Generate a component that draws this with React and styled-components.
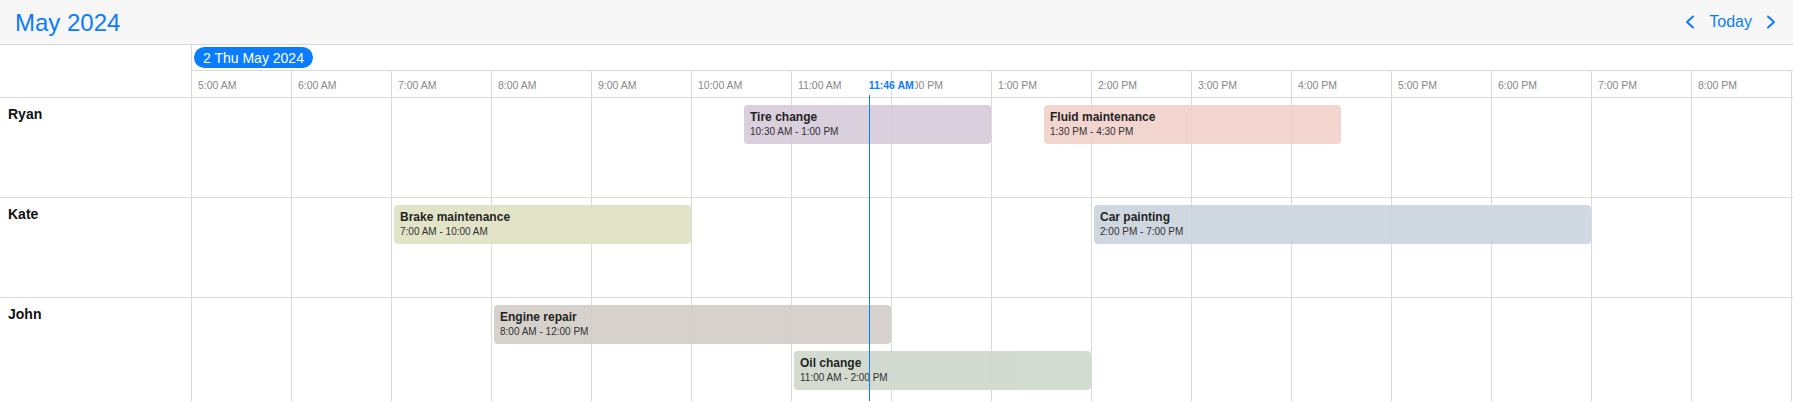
import React from "react";
import styled, { createGlobalStyle } from "styled-components";

const BLUE = "#0a7cff";
const LINE = "#dadada";
const RESOURCE_W = 192;
const HOUR_W = 100;
const START_HOUR = 5;
const NOW = 11 + 46 / 60;

const GlobalStyle = createGlobalStyle`
    body {
        margin: 0;
        background: #fff;
        font-family: "Liberation Sans", Arial, Helvetica, sans-serif;
        color: #111;
        overflow: hidden;
    }
`;

const Page = styled.div`
    width: 1793px;
`;

const Header = styled.div`
    height: 45px;
    box-sizing: border-box;
    display: flex;
    align-items: center;
    justify-content: space-between;
    padding: 0 17px 0 15px;
    background: #f7f7f7;
    border-bottom: 1px solid #d6d6d6;
`;

const Title = styled.div`
    font-size: 24px;
    color: ${BLUE};
    margin-top: 1px;
`;

const Nav = styled.div`
    display: flex;
    align-items: center;
    gap: 14px;
    color: ${BLUE};
`;

const Today = styled.span`
    font-size: 16px;
`;

const Row = styled.div`
    display: flex;
    height: ${(p) => p.height}px;
    box-sizing: border-box;
    border-bottom: 1px solid ${(p) => (p.noLine ? "transparent" : LINE)};
`;

const Corner = styled.div`
    width: ${RESOURCE_W}px;
    flex-shrink: 0;
    box-sizing: border-box;
    border-right: 1px solid ${LINE};
`;

const ResourceName = styled(Corner)`
    padding: 8px 8px;
    font-size: 14px;
    font-weight: bold;
    color: #111;
`;

const TimelineHead = styled.div`
    display: flex;
    flex-direction: column;
    flex: 1;
`;

const DateRow = styled.div`
    height: 26px;
    box-sizing: border-box;
    border-bottom: 1px solid ${LINE};
    padding: 2px 0 0 2px;
`;

const DateBadge = styled.span`
    display: inline-flex;
    align-items: center;
    height: 21px;
    padding: 0 9px;
    border-radius: 11px;
    background: ${BLUE};
    color: #fff;
    font-size: 14px;
`;

const TimeRow = styled.div`
    position: relative;
    display: flex;
    height: 26px;
`;

const HourCell = styled.div`
    width: ${HOUR_W}px;
    flex-shrink: 0;
    box-sizing: border-box;
    border-right: 1px solid ${LINE};
    padding: 8px 0 0 6px;
    font-size: 10.5px;
    color: #888;
`;

const NowLabel = styled.span`
    position: absolute;
    top: 8px;
    padding-right: 1px;
    background: rgba(255, 255, 255, 0.85);
    color: ${BLUE};
    font-size: 10.5px;
    font-weight: bold;
    z-index: 2;
`;

const Body = styled.div`
    position: relative;
`;

const Lane = styled.div`
    position: relative;
    display: flex;
    flex: 1;
`;

const Slot = styled.div`
    width: ${HOUR_W}px;
    flex-shrink: 0;
    box-sizing: border-box;
    border-right: 1px solid ${LINE};
`;

const Event = styled.div`
    position: absolute;
    height: 39px;
    box-sizing: border-box;
    padding: 5px 6px 0;
    border-radius: 4px;
    background: ${(p) => p.color};
    opacity: 0.93;
    overflow: hidden;
    white-space: nowrap;
`;

const EventTitle = styled.div`
    font-size: 12px;
    font-weight: bold;
    color: #111;
`;

const EventTime = styled.div`
    margin-top: 2px;
    font-size: 10px;
    color: #222;
`;

const NowLine = styled.div`
    position: absolute;
    top: -3px;
    bottom: 0;
    width: 1px;
    background: ${BLUE};
    z-index: 3;
`;

const hours = [
    "5:00 AM", "6:00 AM", "7:00 AM", "8:00 AM", "9:00 AM", "10:00 AM",
    "11:00 AM", "12:00 PM", "1:00 PM", "2:00 PM", "3:00 PM", "4:00 PM",
    "5:00 PM", "6:00 PM", "7:00 PM", "8:00 PM",
];

const resources = [
    {
        name: "Ryan",
        events: [
            { title: "Tire change", time: "10:30 AM - 1:00 PM", start: 10.5, end: 13, color: "#d8ccda", level: 0 },
            { title: "Fluid maintenance", time: "1:30 PM - 4:30 PM", start: 13.5, end: 16.5, color: "#f2d2cc", level: 0 },
        ],
    },
    {
        name: "Kate",
        events: [
            { title: "Brake maintenance", time: "7:00 AM - 10:00 AM", start: 7, end: 10, color: "#e0e3c4", level: 0 },
            { title: "Car painting", time: "2:00 PM - 7:00 PM", start: 14, end: 19, color: "#ccd5df", level: 0 },
        ],
    },
    {
        name: "John",
        events: [
            { title: "Engine repair", time: "8:00 AM - 12:00 PM", start: 8, end: 12, color: "#d3cec8", level: 0 },
            { title: "Oil change", time: "11:00 AM - 2:00 PM", start: 11, end: 14, color: "#d0d9cd", level: 1 },
        ],
    },
];

function Chevron({ dir }) {
    const points = dir === "left" ? "8,1.5 2,7 8,12.5" : "2,1.5 8,7 2,12.5";
    return (
        <svg width="10" height="14" viewBox="0 0 10 14">
            <polyline points={points} fill="none" stroke={BLUE} strokeWidth="2" strokeLinecap="round" strokeLinejoin="round" />
        </svg>
    );
}

function App() {
    const nowOffset = (NOW - START_HOUR) * HOUR_W;

    return (
        <Page>
            <GlobalStyle />
            <Header>
                <Title>May 2024</Title>
                <Nav>
                    <Chevron dir="left" />
                    <Today>Today</Today>
                    <Chevron dir="right" />
                </Nav>
            </Header>

            <Row height={53}>
                <Corner />
                <TimelineHead>
                    <DateRow>
                        <DateBadge>2 Thu May 2024</DateBadge>
                    </DateRow>
                    <TimeRow>
                        {hours.map((h) => (
                            <HourCell key={h}>{h}</HourCell>
                        ))}
                        <NowLabel style={{ left: nowOffset }}>11:46 AM</NowLabel>
                    </TimeRow>
                </TimelineHead>
            </Row>

            <Body>
                {resources.map((r, i) => {
                    const levels = Math.max(...r.events.map((e) => e.level)) + 1;
                    return (
                        <Row key={r.name} height={100 + (levels - 1) * 46} noLine={i === resources.length - 1}>
                            <ResourceName>{r.name}</ResourceName>
                            <Lane>
                                {hours.map((h) => (
                                    <Slot key={h} />
                                ))}
                                {r.events.map((e) => (
                                    <Event
                                        key={e.title}
                                        color={e.color}
                                        style={{
                                            left: (e.start - START_HOUR) * HOUR_W + 2,
                                            width: (e.end - e.start) * HOUR_W - 3,
                                            top: 7 + e.level * 46,
                                        }}
                                    >
                                        <EventTitle>{e.title}</EventTitle>
                                        <EventTime>{e.time}</EventTime>
                                    </Event>
                                ))}
                            </Lane>
                        </Row>
                    );
                })}
                <NowLine style={{ left: RESOURCE_W + nowOffset }} />
            </Body>
        </Page>
    );
}

export default App;
